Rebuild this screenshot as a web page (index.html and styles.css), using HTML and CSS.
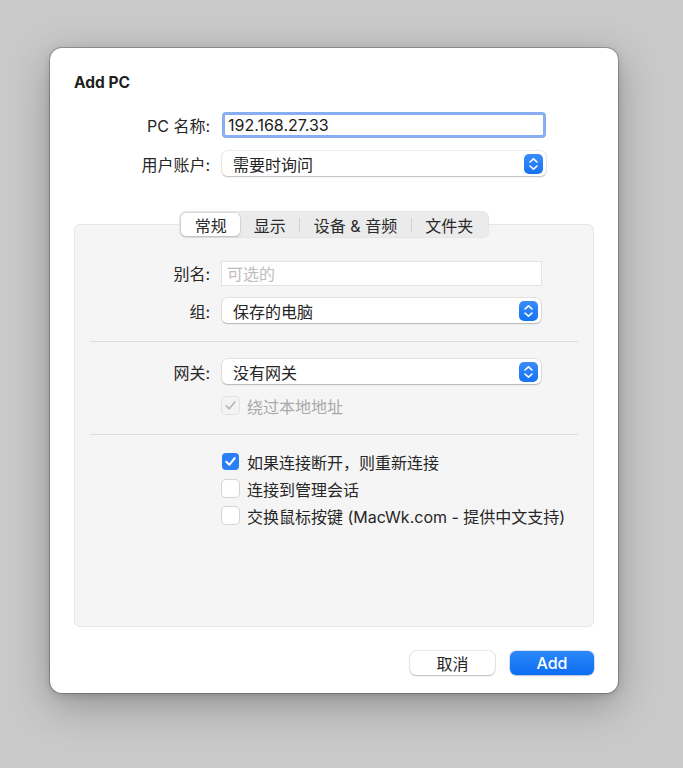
FILE: index.html
```html
<!DOCTYPE html>
<html lang="zh">
<head>
<meta charset="utf-8">
<title>Add PC</title>
<link rel="stylesheet" href="styles.css">
</head>
<body>
<div class="dialog">
  <div class="title">Add PC</div>
  <div class="form top-form">
    <div class="lbl">PC 名称:</div>
    <div class="field focus"><span>192.168.27.33</span></div>
    <div class="lbl">用户账户:</div>
    <div class="select"><span>需要时询问</span>
      <span class="stepper"><svg width="11" height="14" viewBox="0 0 11 14"><path d="M2 5 L5.5 1.8 L9 5 M2 9 L5.5 12.2 L9 9" fill="none" stroke="#fff" stroke-width="1.6" stroke-linecap="round" stroke-linejoin="round"/></svg></span>
    </div>
  </div>

  <div class="tabs-wrap">
    <div class="tabs">
      <div class="tab active">常规</div>
      <div class="tab">显示</div>
      <div class="tab-sep"></div>
      <div class="tab">设备 &amp; 音频</div>
      <div class="tab-sep"></div>
      <div class="tab">文件夹</div>
    </div>
  </div>

  <div class="panel">
    <div class="form panel-form">
      <div class="lbl">别名:</div>
      <div class="field plain"><span class="placeholder">可选的</span></div>
      <div class="lbl">组:</div>
      <div class="select"><span>保存的电脑</span>
        <span class="stepper"><svg width="11" height="14" viewBox="0 0 11 14"><path d="M2 5 L5.5 1.8 L9 5 M2 9 L5.5 12.2 L9 9" fill="none" stroke="#fff" stroke-width="1.6" stroke-linecap="round" stroke-linejoin="round"/></svg></span>
      </div>
    </div>
    <div class="sep"></div>
    <div class="form panel-form">
      <div class="lbl">网关:</div>
      <div class="select"><span>没有网关</span>
        <span class="stepper"><svg width="11" height="14" viewBox="0 0 11 14"><path d="M2 5 L5.5 1.8 L9 5 M2 9 L5.5 12.2 L9 9" fill="none" stroke="#fff" stroke-width="1.6" stroke-linecap="round" stroke-linejoin="round"/></svg></span>
      </div>
      <div></div>
      <div class="check-row disabled">
        <span class="cb cb-disabled"><svg width="17" height="17" viewBox="0 0 17 17"><path d="M4.3 8.8 L7.3 11.8 L12.8 5" fill="none" stroke="#b8b8b8" stroke-width="1.8" stroke-linecap="round" stroke-linejoin="round"/></svg></span>
        <span>绕过本地地址</span>
      </div>
    </div>
    <div class="sep sep2"></div>
    <div class="checks">
      <div class="check-row">
        <span class="cb cb-on"><svg width="17" height="17" viewBox="0 0 17 17"><path d="M4.3 8.8 L7.3 11.8 L12.8 5" fill="none" stroke="#fff" stroke-width="2" stroke-linecap="round" stroke-linejoin="round"/></svg></span>
        <span>如果连接断开，则重新连接</span>
      </div>
      <div class="check-row">
        <span class="cb"></span>
        <span>连接到管理会话</span>
      </div>
      <div class="check-row">
        <span class="cb"></span>
        <span>交换鼠标按键 (MacWk.com - 提供中文支持)</span>
      </div>
    </div>
  </div>

  <div class="buttons">
    <div class="btn">取消</div>
    <div class="btn primary">Add</div>
  </div>
</div>
</body>
</html>
```

FILE: styles.css
```css
* { box-sizing: border-box; }
html, body { margin: 0; padding: 0; }
body {
  width: 683px;
  height: 768px;
  background: #c9c9c9;
  font-family: "Inter", "Noto Sans CJK SC", sans-serif;
  font-size: 16px;
  color: #242424;
  padding: 48px 0 0 50px;
  overflow: hidden;
}
.dialog {
  width: 568px;
  height: 645px;
  background: #fff;
  border-radius: 12px;
  box-shadow: 0 0 0 1px rgba(0,0,0,0.22), 0 12px 40px rgba(0,0,0,0.28), 0 2px 8px rgba(0,0,0,0.15);
  padding: 25px 24px 0 24px;
  display: flex;
  flex-direction: column;
}
.title {
  font-weight: 700;
  font-size: 15.5px;
  line-height: 20px;
  color: #1f1f1f;
}
.form {
  display: grid;
  grid-template-columns: 136px 1fr;
  column-gap: 12px;
  align-items: center;
}
.top-form {
  margin-top: 19px;
  grid-template-columns: 136px 324px;
  row-gap: 13px;
}
.lbl {
  text-align: right;
  white-space: nowrap;
  color: #262626;
}
.field {
  background: #fff;
  display: flex;
  align-items: center;
  white-space: nowrap;
}
.field.focus {
  height: 26px;
  border: 3px solid #89adf3;
  border-radius: 4px;
  padding-left: 3px;
  color: #1a1a1a;
}
.field.plain {
  height: 23px;
  box-shadow: 0 0 0 1px #e3e3e3, 0 1px 0 0 #d6d6d6;
  padding-left: 5px;
}
.placeholder { color: #bdbdbd; }
.select {
  height: 25px;
  background: #fff;
  border-radius: 5px;
  box-shadow: 0 0 0 0.5px rgba(0,0,0,0.14), 0 1px 1.5px rgba(0,0,0,0.2);
  display: flex;
  align-items: center;
  justify-content: space-between;
  padding: 0 3px 0 11px;
  white-space: nowrap;
}
.stepper {
  width: 19px;
  height: 20px;
  border-radius: 5px;
  background: linear-gradient(#3a8cfa, #1673f2);
  display: flex;
  align-items: center;
  justify-content: center;
}
.tabs-wrap {
  margin-top: 35px;
  display: flex;
  justify-content: center;
  position: relative;
  z-index: 1;
}
.tabs {
  height: 27px;
  background: #ebebeb;
  border-radius: 7px;
  box-shadow: inset 0 0 0 0.5px rgba(0,0,0,0.06);
  display: flex;
  align-items: center;
  padding: 2px;
}
.tab {
  height: 23px;
  padding: 0 13.5px;
  display: flex;
  align-items: center;
  font-size: 16px;
  color: #2a2a2a;
  white-space: nowrap;
}
.tab.active {
  background: #fff;
  border-radius: 5px;
  box-shadow: 0 0 0 0.5px rgba(0,0,0,0.12), 0 1px 2px rgba(0,0,0,0.15);
}
.tab-sep {
  width: 1px;
  height: 14px;
  background: #d0d0d0;
}
.panel {
  margin-top: -14px;
  height: 403px;
  background: #f5f5f5;
  border: 1px solid #e6e6e6;
  border-radius: 6px;
  padding-top: 36px;
}
.panel-form {
  grid-template-columns: 135px 319px;
  row-gap: 13px;
}
.sep {
  height: 1px;
  background: #dcdcdc;
  margin: 18px 15px 17px 15px;
}
.sep.sep2 {
  margin: 20px 15px 18px 15px;
}
.checks {
  padding-left: 147px;
  display: flex;
  flex-direction: column;
  gap: 10px;
}
.check-row {
  display: flex;
  align-items: center;
  gap: 8px;
  height: 17px;
  white-space: nowrap;
  color: #262626;
}
.check-row.disabled { color: #a9a9a9; }
.cb {
  width: 17px;
  height: 17px;
  border-radius: 4px;
  background: #fff;
  box-shadow: 0 0 0 1px #d4d4d4;
  flex: none;
  display: flex;
}
.cb-on {
  background: #2b7ff6;
  box-shadow: none;
}
.cb-disabled {
  background: #f3f3f3;
  box-shadow: 0 0 0 1px #e1e1e1;
}
.buttons {
  margin-top: 24px;
  display: flex;
  justify-content: flex-end;
  gap: 15px;
}
.btn {
  width: 85px;
  height: 24px;
  border-radius: 6px;
  background: #fff;
  box-shadow: 0 0 0 0.5px rgba(0,0,0,0.16), 0 1px 1.5px rgba(0,0,0,0.2);
  display: flex;
  align-items: center;
  justify-content: center;
  color: #262626;
}
.btn.primary {
  width: 84px;
  background: linear-gradient(#2d88fb, #0c6df3);
  color: #fff;
  font-weight: 500;
  box-shadow: 0 0 0 0.5px rgba(0,80,200,0.3), 0 1px 1.5px rgba(0,0,0,0.15);
}
```
